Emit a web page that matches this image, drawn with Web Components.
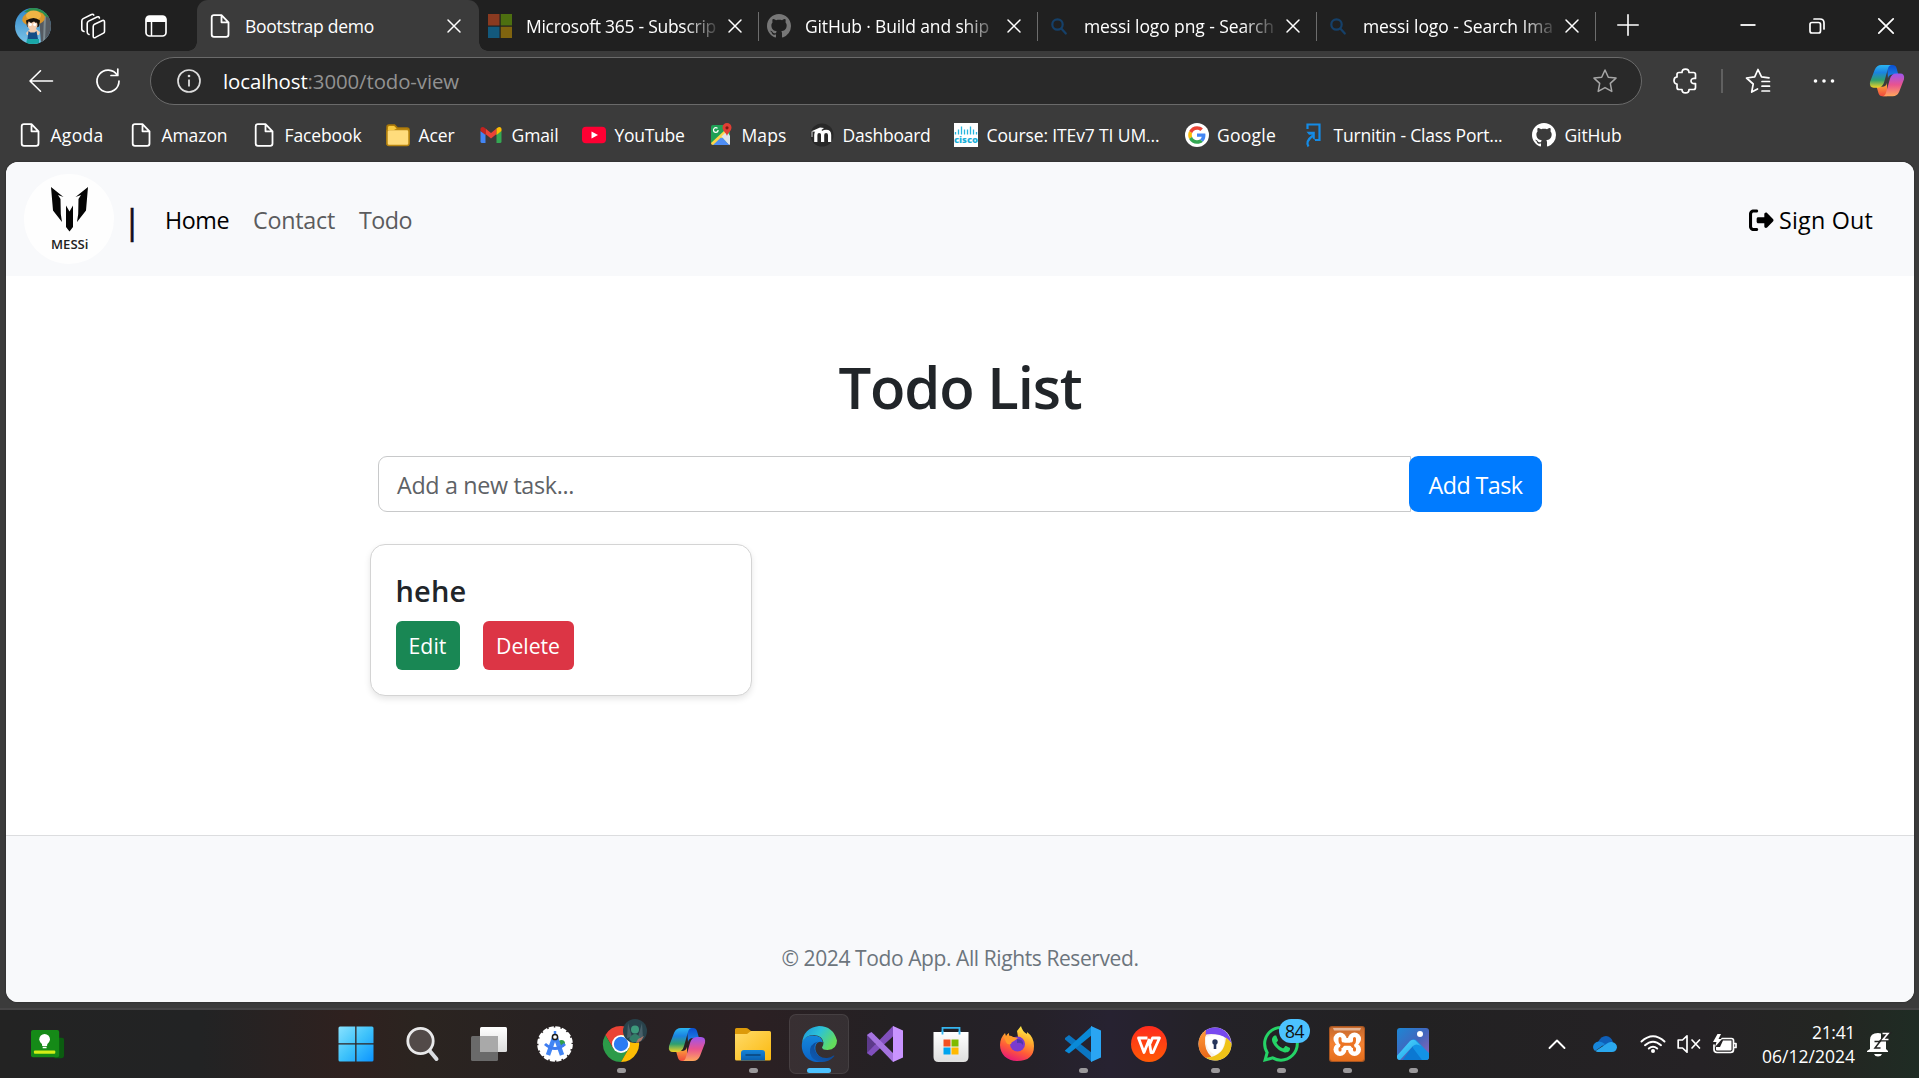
<!DOCTYPE html>
<html lang="en">
<head>
<meta charset="utf-8">
<title>Bootstrap demo</title>
<style>
html,body{margin:0;height:100%;overflow:hidden;background:#3b3b3b}
body{font-family:"Open Sans","Noto Sans",sans-serif}
</style>
</head>
<body>
<desktop-screen></desktop-screen>
<script>
const GH='M8 0C3.58 0 0 3.58 0 8c0 3.54 2.29 6.53 5.47 7.59.4.07.55-.17.55-.38 0-.19-.01-.82-.01-1.49-2.01.37-2.53-.49-2.69-.94-.09-.23-.48-.94-.82-1.13-.28-.15-.68-.52-.01-.53.63-.01 1.08.58 1.23.82.72 1.21 1.87.87 2.33.66.07-.52.28-.87.51-1.07-1.78-.2-3.64-.89-3.64-3.95 0-.87.31-1.59.82-2.15-.08-.2-.36-1.02.08-2.12 0 0 .67-.21 2.2.82.64-.18 1.32-.27 2-.27s1.36.09 2 .27c1.53-1.04 2.2-.82 2.2-.82.44 1.1.16 1.92.08 2.12.51.56.82 1.27.82 2.15 0 3.07-1.87 3.75-3.65 3.95.29.25.54.73.54 1.48 0 1.07-.01 1.93-.01 2.2 0 .21.15.46.55.38A8.01 8.01 0 0 0 16 8c0-4.42-3.58-8-8-8z';
const lg=(id,stops,dir='x1="0" y1="0" x2="0" y2="1"')=>`<linearGradient id="${id}" ${dir}>${stops.map((s,i)=>`<stop offset="${i/(stops.length-1)}" stop-color="${s}"/>`).join('')}</linearGradient>`;
const line='fill="none" stroke="#fff" stroke-linecap="round" stroke-linejoin="round"';

/* name: [width, height, markup] */
const ICONS={
avatar:[36,36,`<defs><clipPath id="c"><circle cx="18" cy="18" r="18"/></clipPath>${lg('sky',['#3187c9','#7cc4e8'])}</defs><g clip-path="url(#c)"><path fill="url(#sky)" d="M0 0h36v36H0z"/><path fill="#555b62" d="M24 8l12-2v30H26z"/><path fill="#7d8a90" d="M29 8l2 0-1 26-2 0z"/><path fill="#2e8f4d" d="M9 4l8-5 12 2 6 9-8-3z"/><ellipse cx="18.500" cy="10.500" rx="11.500" ry="7" fill="#d9962b" transform="rotate(-8 18 10)"/><ellipse cx="18.500" cy="7.500" rx="7.500" ry="5" fill="#efb444"/><path fill="#17130f" d="M11 12.500q8-5 14 0l-1 6q-6 3-12 0z"/><ellipse cx="17.500" cy="17" rx="5" ry="5.300" fill="#f3cdb0"/><path fill="#17130f" d="M11.500 13q6-4 12 0l-2.500 2-2-1.500-3 1.500-2-1.500z"/><circle cx="15.300" cy="16.500" r="1.500" fill="#fff"/><circle cx="19.700" cy="16.500" r="1.500" fill="#fff"/><path fill="#f3cdb0" d="M15 21h6l4 3-1 3-12 0-1-2z"/><path fill="#154c86" d="M13.500 23l2 1.500h4l2-1.500 1.500 8-10.500 0z"/><path fill="#19a7a8" d="M12 31h12v5H11z"/></g>`],
spaces:[26,26,`<g ${line} stroke-width="1.600"><path d="M14.500 11.200l8-3.600q2-.7 2 1.300v9.500q0 1.200-1 1.700l-8 4.300q-2.300 1-2.300-1.200v-9.800q0-1.600 1.300-2.200z"/><path d="M9 21.500q-1.800-.5-1.800-2.500V10.500q0-1.700 1.400-2.400L17 4q1.800-.8 2.400 1"/><path d="M4 18.500q-2.200-.5-2.200-2.500V8q0-1.700 1.400-2.400L11.500 1.500q1.600-.7 2.300.6"/></g>`],
tabmenu:[22,22,`<rect x="1" y="1" width="20" height="20" rx="3.500" fill="none" stroke="#fff" stroke-width="1.700"/><path fill="#fff" d="M1 7V4q0-3 3-3h14q3 0 3 3v3H1z"/><path stroke="#fff" stroke-width="1.500" d="M6.500 6v15"/>`],
doc:[24,24,`<path ${line} stroke-width="1.800" d="M13.500 1.200H6Q3.700 1.200 3.700 3.500v17Q3.700 22.800 6 22.800h12.200q2.300 0 2.300-2.300V8.300zV8.300h7"/>`],
ms:[24,24,`<path fill="#8a3a20" d="M0 0h11.500v11.500H0z"/><path fill="#4d6f10" d="M12.700 0H24v11.500H12.700z"/><path fill="#13597c" d="M0 12.700h11.500V24H0z"/><path fill="#80640f" d="M12.700 12.700H24V24H12.700z"/>`],
ghdim:[16,16,`<path fill="#777" d="${GH}"/>`],
github:[16,16,`<path fill="#fff" d="${GH}"/>`],
lens:[24,24,`<g fill="none" stroke="#154069" stroke-width="2.200" stroke-linecap="round"><circle cx="11.500" cy="10.500" r="5.200"/><path d="M15.300 14.500l4.500 5"/></g>`],
x:[14,14,`<path ${line} stroke-width="1.500" d="M1 1l12 12M13 1L1 13"/>`],
plus:[22,22,`<path ${line} stroke-width="1.600" d="M11 .8v20.400M.8 11h20.400"/>`],
min:[16,16,`<path stroke="#fff" stroke-width="1.800" d="M.5 7h15"/>`],
restore:[16,16,`<g ${line} stroke-width="1.700"><rect x="1" y="4.500" width="10.500" height="10.500" rx="2"/><path d="M5 1h6q4 0 4 4v6"/></g>`],
closew:[16,16,`<path ${line} stroke-width="1.700" d="M.8.8l14.400 14.400M15.200.8L.8 15.200"/>`],
back:[24,24,`<path ${line} stroke-width="1.600" d="M11.500 1.800L1 12l10.500 10.200M1 12h22.500"/>`],
reload:[26,26,`<g ${line} stroke-width="1.700"><path d="M22.300 7.200A11 11 0 1 0 24 13"/><path d="M22.800 1v6.500H16"/></g>`],
info:[24,24,`<circle cx="12" cy="12" r="11" fill="none" stroke="#ddd" stroke-width="1.700"/><path stroke="#ddd" stroke-width="1.800" d="M12 10.500v7"/><circle cx="12" cy="7" r="1.300" fill="#ddd"/>`],
star:[24,24,`<path fill="none" stroke="#a6a6a6" stroke-width="1.500" stroke-linejoin="round" d="M12 1l3.300 7.200 7.700.9-5.700 5.300 1.500 8-6.800-3.800-6.800 3.800 1.500-8L1 9.100l7.700-.9z"/>`],
puzzle:[24,26,`<path ${line} stroke-width="1.700" d="M9 4.500c0-4.600 7-4.600 7 0h4.500q2 0 2 2v4c-6-1.500-6 6.500 0 5v4q0 2-2 2H16c0 4.600-7 4.600-7 0H6q-2 0-2-2v-3.500c-4 0-4-7 0-7V6.500q0-2 2-2z"/>`],
favs:[26,26,`<g ${line} stroke-width="1.700"><path d="M12.500 21l-5.800 3 1.500-8L1.500 10l8.200-1.200L13 1.500l3.500 7.300 7.500 1"/><path d="M17 13.500h7.500M17 18.200h7.500M17 23h7.500"/></g>`],
dots:[22,6,`<g fill="#fff"><circle cx="2.500" cy="3" r="1.800"/><circle cx="11" cy="3" r="1.800"/><circle cx="19.500" cy="3" r="1.800"/></g>`],
copilot:[36,33,`<defs>${lg('a',['#2bb5f2','#1b83e0','#2f9f6f','#f1d326'])}${lg('b',['#0a4fd0','#1f86ea'])}${lg('d',['#9c55ef','#e9538f','#ffa75c'])}${lg('e',['#ffb13c','#f0483d'])}</defs><path fill="url(#b)" d="M18 0h6q3 0 4 3l2 7h-6q-4 0-5 4z"/><path fill="url(#e)" d="M18 33h-5q-3 0-4-3l-2-7h6q4 0 5-4z"/><path fill="url(#a)" d="M12 0h11q-3 0-4 4l-4 14q-1.500 6-7 6H4q-5 0-4-6L5 5q2-5 7-5z"/><path fill="url(#d)" d="M24 33H13q3 0 4-4l4-14q1.500-6 7-6h4q5 0 4 6l-5 13q-2 5-7 5z"/>`],
folder:[24,24,`<path fill="#c9931a" stroke="#a87708" stroke-width="1.500" d="M1 21V4q0-2 2-2h5.500l3 3H21q2 0 2 2v13z"/><rect x="1" y="6.500" width="22" height="16" rx="2" fill="#ffdc7c" stroke="#b88510" stroke-width="1.500"/><path fill="#f8c93e" d="M2 7V4.500Q2 3 3.500 3H8l2.500 2.500L8 7z"/>`],
gmail:[24,24,`<path fill="#4285f4" d="M1.500 8v10.500q0 1.500 1.500 1.500h3.500V11z"/><path fill="#34a853" d="M17.500 11v9H21q1.500 0 1.500-1.500V8z"/><path fill="#ea4335" d="M6.500 11V5.500L12 10l5.500-4.500V11L12 15.500z"/><path fill="#c5221f" d="M1.500 8V6.200C1.500 4 4 3.500 5.500 4.700l1 .8V12z"/><path fill="#fbbc04" d="M17.500 12V5.500l1-.8c1.500-1.200 4-.7 4 1.500V8z"/>`],
youtube:[24,24,`<rect y="3.800" width="24" height="16.500" rx="4" fill="#ff0033"/><path fill="#fff" d="M9.500 8.500v7L16 12z"/>`],
maps:[24,24,`<path fill="#1fa055" d="M2 4q0-2 2-2h17v18H2z"/><path fill="#4e8df5" d="M4 22L12 13l8 9z"/><path fill="#fdd64b" d="M2 20L16 7l3 3L5 22H4q-2 0-2-2z"/><path fill="#dfe4ea" d="M12.500 13.500L18 8l3 5v8.500L20 22z"/><path fill="#4e8df5" d="M4 22l8-7.500L20 22z"/><circle cx="6.800" cy="7" r="2.300" fill="none" stroke="#fff" stroke-width="1.200" stroke-dasharray="11.500 3"/><path fill="#df3f34" d="M18 13c-.5-3-4.500-5-4.500-8.500a4.500 4.500 0 0 1 9 0C22.500 8 18.500 10 18 13z"/><circle cx="18" cy="4.800" r="1.600" fill="#7c1a12"/>`],
moodle:[24,24,`<circle cx="12" cy="12" r="11.500" fill="#292929"/><path fill="none" stroke="#fff" stroke-width="3.200" d="M5.800 19v-7q0-3.600 3.400-3.600t3.400 3.600v7M12.600 12q0-3.600 3.500-3.600t3.500 3.600v7"/><path fill="#fff" d="M1 8.500l9-4 4 .6-5 4z"/><path stroke="#fff" stroke-width=".8" d="M2 9v5"/>`],
cisco:[24,24,`<path fill="#fff" d="M0 0h24v24H0z"/><g stroke="#26b5dd" stroke-width="1.300"><path d="M1.500 9v2.500M4.500 6.500v5M7.500 3.500v8M10.500 6.500v5M13.500 6.500v5M16.500 3.500v8M19.500 6.500v5M22.500 9v2.500"/></g><text x="0" y="20" font-size="9" font-weight="800" fill="#1bafd9" font-family="Open Sans" textLength="24" lengthAdjust="spacingAndGlyphs">cisco</text>`],
google:[24,24,`<circle cx="12" cy="12" r="12" fill="#fff"/><g transform="translate(3.200 3.200) scale(.367)"><path fill="#EA4335" d="M24 9.500c3.540 0 6.710 1.220 9.210 3.600l6.850-6.850C35.900 2.380 30.470 0 24 0 14.620 0 6.510 5.380 2.560 13.220l7.980 6.190C12.430 13.720 17.740 9.500 24 9.500z"/><path fill="#4285F4" d="M46.980 24.550c0-1.570-.15-3.090-.38-4.550H24v9.020h12.940c-.58 2.960-2.260 5.480-4.780 7.180l7.730 6c4.510-4.180 7.090-10.360 7.090-17.650z"/><path fill="#FBBC05" d="M10.530 28.590c-.48-1.450-.76-2.990-.76-4.590s.27-3.140.76-4.590l-7.980-6.190C.92 16.460 0 20.120 0 24c0 3.880.92 7.540 2.560 10.780l7.970-6.190z"/><path fill="#34A853" d="M24 48c6.480 0 11.930-2.130 15.890-5.810l-7.730-6c-2.150 1.450-4.920 2.300-8.160 2.300-6.260 0-11.570-4.220-13.470-9.910l-7.980 6.190C6.510 42.620 14.620 48 24 48z"/></g>`],
turnitin:[24,24,`<g fill="none" stroke="#148be6" stroke-width="2.200"><path d="M6.500 6V1.500h12V17h-4.500"/><path d="M7.500 23.500q-3.500-5 4.500-11"/></g><path fill="#148be6" d="M5.500 8.800h8.300v8.200l-2.200-1.800v-3.500H8z"/>`],
signout:[512,512,`<path d="M377.900 105.900L500.700 228.700c7.200 7.200 11.300 17.100 11.300 27.300s-4.100 20.100-11.300 27.300L377.900 406.100c-6.400 6.400-15 9.900-24 9.900c-18.700 0-33.900-15.200-33.900-33.900l0-62.100-128 0c-17.700 0-32-14.300-32-32l0-64c0-17.700 14.300-32 32-32l128 0 0-62.100c0-18.700 15.200-33.900 33.900-33.900c9 0 17.600 3.600 24 9.900zM160 96L96 96c-17.700 0-32 14.300-32 32l0 256c0 17.700 14.300 32 32 32l64 0c17.700 0 32 14.300 32 32s-14.300 32-32 32l-64 0c-53 0-96-43-96-96L0 128C0 75 43 32 96 32l64 0c17.700 0 32 14.300 32 32s-14.300 32-32 32z"/>`],
messi:[90,90,`<circle cx="45" cy="45" r="45" fill="#fefefe"/><g fill="#050505"><path d="M27 13l12.500 10-5.500-2 2.500 4 .3 15 1.200 8-9-11.500z"/><path d="M64 13L51.500 23l5.500-2-2.500 4-.3 15-1.200 8 9-11.500z"/><path d="M42 31.500l3.500 6 3.500-6V53l-3.500 4.500L42 53z"/></g><text x="27" y="74.500" font-size="12.500" font-weight="600" font-family="Open Sans" fill="#222" textLength="37.500" lengthAdjust="spacingAndGlyphs">MESSi</text>`],
start:[36,36,`<defs>${lg('w',['#8be3ff','#3fc3fb','#0a92ff'],'gradientUnits="userSpaceOnUse" x1="0" y1="0" x2="36" y2="36"')}</defs><path fill="url(#w)" d="M2 .5h15.200v16.700H.5V2Q.5.500 2 .5zM18.500.5H34q1.500 0 1.500 1.500v15.200h-17zM.5 18.500h16.700v17H2q-1.500 0-1.500-1.500zM18.500 18.500h17V34q0 1.500-1.500 1.500H18.500z"/>`],
search:[36,36,`<path stroke="#d9dce0" stroke-width="4" stroke-linecap="round" d="M24 24l7.500 9"/><circle cx="15.500" cy="15" r="12.700" fill="#524a48" stroke="#e9e9ea" stroke-width="2.800"/>`],
taskview:[36,36,`<defs>${lg('t',['#fff','#dcdcdc'])}</defs><rect x="9" y="1" width="27" height="25" rx="1.500" fill="url(#t)"/><rect y="10" width="27" height="25" rx="1.500" fill="#6a6a6a"/><path fill="#a9a9a9" d="M9 10h18v16H9z"/>`],
android:[36,36,`<circle cx="18" cy="18" r="16.600" fill="#fff" stroke="#fff" stroke-width="2.500" stroke-dasharray="5 1.500"/><circle cx="24.500" cy="17.500" r="3.500" fill="#2e9e4d"/><path fill="none" stroke="#4285f4" stroke-width="4.500" d="M17 12L11 29M19 12l6 17"/><path fill="none" stroke="#3f7df0" stroke-width="3" d="M8 18q10 9 20 0"/><path stroke="#4285f4" stroke-width="2.500" d="M18 5v5"/><circle cx="18" cy="11" r="2.600" fill="#fff" stroke="#1b1b1b" stroke-width="1.500"/>`],
chrome:[36,36,`<path fill="#ea4335" d="M2.400 9l7.800 13.500L18 9h15.600A18 18 0 0 0 2.400 9z"/><path fill="#2c9b49" d="M2.400 9l7.800 13.500L18 27l8-4.500L18 36A18 18 0 0 1 2.400 9z"/><path fill="#fbbc04" d="M18 9h15.600A18 18 0 0 1 18 36l7.800-13.500z"/><circle cx="18" cy="18" r="9" fill="#fff"/><circle cx="18" cy="18" r="7.200" fill="#2b7bf3"/>`],
profile:[24,24,`<circle cx="12" cy="12" r="12" fill="#28424b"/><path fill="#476069" d="M5 4l4 14-5 1zM19 4l-4 14 5 1z"/><circle cx="12" cy="10.500" r="4" fill="#3d9a7c"/><path fill="#337d68" d="M6 20q6-10 12 0l-3 3H9z"/><path fill="#a8776a" d="M15 20l6-3-3 5-5 2z"/>`],
explorer:[36,36,`<defs>${lg('f',['#ffdb69','#fbb90f'],'x1="0" y1="0" x2="1" y2="1"')}${lg('g',['#1484d8','#0b5fae'])}</defs><path fill="#dc9a0a" d="M0 10V3.500Q0 2 1.500 2H11q1.500 0 2.500 1l2.500 2v5z"/><path fill="url(#f)" d="M0 8h12l4-3h18.500q1.500 0 1.500 1.500V33q0 1.500-1.500 1.500h-33Q0 34.500 0 33z"/><path fill="url(#g)" d="M6 34.500V27q0-3 3-3h18q3 0 3 3v7.500z"/><path stroke="#0a4379" stroke-width="1.500" stroke-linecap="round" d="M11 29h14"/>`],
edge:[36,36,`<defs>${lg('h',['#1b91dc','#2cc2d8','#63dc5c'],'x1="0" y1="0" x2="1" y2=".5"')}${lg('i',['#1486dc','#0b63c5'])}${lg('j',['#0c3f85','#0f5cb5'],'x1="1" y1="0" x2="0" y2="1"')}</defs><path fill="url(#i)" d="M1 17Q3 9.500 12 9.500q9 0 10 7-5-2-7 2-2.500 6 3 11.500 4 3.500 8 3.500-4 2.500-9 2.500C7 36-.5 28 1 17z"/><path fill="url(#j)" d="M17 15.500q-5 3-3 9 3 8 12 7.500 4-.5 6.500-2.500 1.500-.5.500 1Q28 36 20 36q-9-1-11-9-1-9 8-11.500z"/><path fill="url(#h)" d="M1 17Q2.500 2 18 0q14 0 18 14.500 0 9-9.500 9.500-5 0-5.500-2.500 1.500-2 1.500-5-1-7-9.500-7.500Q4 9 1 17z"/>`],
vs:[36,36,`<path fill="#5c3a8a" d="M0 9l3-2.500L8 9v18l-5 2.500L0 27z"/><path fill="#8150bd" d="M0 27L26 0l6 5L4.500 30z"/><path fill="#a574df" d="M0 9l4.500-3L30 31l-4 5z"/><path fill="#c994ff" d="M26 0l10 4.500v27L26 36z"/>`],
store:[36,36,`<defs>${lg('s',['#fff','#dedede'])}</defs><path fill="none" stroke="#35b5ef" stroke-width="1.800" d="M9.500 8V1.900h17V8"/><path fill="url(#s)" d="M.5 6h35v25q0 5-5 5h-25q-5 0-5-5z"/><path fill="none" stroke="#35b5ef" stroke-width="1.800" d="M9.500 5v3.500M26.500 5v3.500"/><path fill="#f25022" d="M10.500 13.500h7v7h-7z"/><path fill="#7fba00" d="M18.500 13.500h7v7h-7z"/><path fill="#00a4ef" d="M10.500 21.500h7v7h-7z"/><path fill="#ffb900" d="M18.500 21.500h7v7h-7z"/>`],
firefox:[36,36,`<defs>${lg('k',['#fff04e','#ffae2e','#ff5a38','#e5167c'],'x1=".7" y1="0" x2=".3" y2="1"')}</defs><path fill="url(#k)" d="M18 35C8 35 1 28 1 19c0-5 2-9 5-12l1 3q1-2 3-3v3l4 1 5 0-1-6 4-5q1 5 6 8l0-2q7 5 7 14 0 15-17 15z"/><circle cx="18.500" cy="18" r="7.500" fill="#7a3bd0"/><path fill="#ff9a2a" d="M5 11q6-3 9 0l5 1-4 3q-3 1-3 3-4 1-5-2z"/><path fill="#4e36b0" d="M18 13q7 0 6 6-2-3-6-2z"/>`],
vscode:[36,36,`<path fill="#0b76c2" d="M0 12l4-3 23 18v9L0 13.500z"/><path fill="#0a8ad8" d="M0 24.500L27 0v9L4 27.500 0 25z"/><path fill="#2aa5f3" d="M26 0l10 4.500v27L26 36z"/>`],
wps:[36,36,`<defs>${lg('r',['#ff2b1d','#ff5a06'])}</defs><circle cx="18" cy="18" r="18" fill="url(#r)"/><path fill="none" stroke="#fff" stroke-width="2.800" stroke-linejoin="round" d="M16.500 12H7.500l5.500 14.500L18 14l2 12.500h2L28.500 12h-7l-3.500 8"/>`],
shield:[36,36,`<defs>${lg('o',['#ff9a3a','#e9691a'])}</defs><circle cx="18" cy="18" r="16.500" fill="#f6f2ec"/><path fill="url(#o)" d="M9 4Q1.500 9 1.500 18q0 9 7 14 3 0 6-1Q7 24 8 13q0-5 6-9z"/><path fill="#7749ef" d="M9 4q12-6 21 3 4 5 4.500 10-5-6-12-8-7-1.500-14-.5z"/><path fill="#efc318" d="M34.500 18Q34 32 20 34.500q-8 0-11-3 9 0 15-6 4-4 5-14 4 3 5.500 6.500z"/><path fill="#fff" d="M9 11q9-4 18 0 2 12-9 18-10-5-9-18z"/><circle cx="18" cy="16" r="2.700" fill="#25355c"/><path fill="#25355c" d="M16.700 17h2.600v6h-2.600z"/>`],
whatsapp:[16,16,`<path fill="#25d366" d="M13.601 2.326A7.850 7.850 0 0 0 7.994 0C3.627 0 .068 3.558.064 7.926c0 1.399.366 2.760 1.057 3.965L0 16l4.204-1.102a7.900 7.900 0 0 0 3.790.965h.004c4.368 0 7.926-3.558 7.930-7.930A7.900 7.900 0 0 0 13.600 2.326zM7.994 14.521a6.600 6.600 0 0 1-3.356-.92l-.24-.144-2.494.654.666-2.433-.156-.251a6.560 6.560 0 0 1-1.007-3.505c0-3.626 2.957-6.584 6.591-6.584a6.560 6.560 0 0 1 4.660 1.931 6.560 6.560 0 0 1 1.928 4.660c-.004 3.639-2.961 6.592-6.592 6.592m3.615-4.934c-.197-.099-1.170-.578-1.353-.646-.182-.065-.315-.099-.445.099-.133.197-.513.646-.627.775-.114.133-.232.148-.43.05-.197-.1-.836-.308-1.592-.985-.59-.525-.985-1.175-1.103-1.372-.114-.198-.011-.304.088-.403.087-.088.197-.232.296-.346.1-.114.133-.198.198-.33.065-.134.034-.248-.015-.347-.05-.099-.445-1.076-.612-1.470-.16-.389-.323-.335-.445-.34-.114-.007-.247-.007-.38-.007a.73.730 0 0 0-.529.247c-.182.198-.691.677-.691 1.654s.71 1.916.81 2.049c.098.133 1.394 2.132 3.383 2.992.47.205.84.326 1.129.418.475.152.904.129 1.246.08.38-.058 1.171-.48 1.338-.943.164-.464.164-.86.114-.943-.049-.084-.182-.133-.38-.232"/>`],
xampp:[36,36,`<defs>${lg('x',['#c4692f','#f58232','#e56e1c'])}</defs><rect width="36" height="36" rx="3" fill="#a95520"/><rect x="1" y="1" width="34" height="34" rx="3" fill="url(#x)"/><path fill="#fff" opacity=".5" d="M4 2h28l-1 2.500H5z"/><g fill="#fff"><circle cx="11" cy="13" r="6.500"/><circle cx="25.500" cy="13" r="6.500"/><circle cx="11" cy="23.500" r="6.500"/><circle cx="25.500" cy="23.500" r="6.500"/><path d="M11 12h14v12H11z"/></g><g fill="none" stroke="#ec7424" stroke-width="3" stroke-linecap="round"><path d="M11 12.500v2q0 3 3 3.700h8.500q3-.7 3-3.700v-2M11 24v-1.500M25.500 24v-1.500"/><path d="M12.500 20.500l2-2.500M24 20.500L22 18"/></g>`],
photos:[36,36,`<defs>${lg('p',['#178bd8','#4266bd','#a263b5'],'x1="0" y1="0" x2="1" y2="1"')}${lg('q',['#55dcff','#179ce8'],'x1="0" y1="0" x2="1" y2="1"')}<clipPath id="pc"><rect x="2" y="2" width="32" height="32" rx="3"/></clipPath></defs><g clip-path="url(#pc)"><path fill="url(#p)" d="M0 0h36v36H0z"/><path fill="#0b78d2" d="M6 36l12-16 18 16z"/><path fill="#1393e6" d="M17 14q3-2 5 1l14 14v7l-9-2-9-12z"/><path fill="url(#q)" d="M0 32l15-17q4-3 7 1l4 4q-5-3-8 0L5 34H2z"/></g><circle cx="25" cy="8" r="3" fill="#fff"/>`],
widget:[36,30,`<path fill="#0b5c10" d="M28 8h4q2 0 2 2v16q0 3-3 3h-7z"/><rect width="29" height="28" rx="2" fill="#158a17"/><rect x="3" y="21" width="22" height="3.500" rx="1" fill="#d2ee17"/><circle cx="14" cy="9.500" r="5.500" fill="#fff"/><path fill="#fff" d="M11 13h6l-.5 3.500h-5zM12 17.300h4v1.500h-4z"/>`],
chev:[18,12,`<path ${line} stroke-width="1.900" d="M1.500 10L9 2.500l7.500 7.500"/>`],
onedrive:[24,16,`<path fill="#0f5fb8" d="M5 6q3-6 8-6 5 .5 7 6l-8 5z"/><path fill="#1786da" d="M6 5.500q3 0 6 2.500l-10 7q-2-1.500-2-4 .5-5 6-5.500z"/><path fill="#2aa8ee" d="M2.500 15L14 7.500q2-2 5-1.500 5 1 5 5.500-1 4.500-5 4.500H5q-1.500 0-2.500-1z"/>`],
wifi:[26,18,`<g ${line} stroke-width="2"><path d="M1.500 6.500Q13-4 24.500 6.500M5 10.200q8-7 16 0M8.800 13.500q4.200-3.500 8.400 0"/></g><circle cx="13" cy="16" r="2" fill="#fff"/>`],
mute:[24,20,`<g ${line} stroke-width="1.700"><path d="M10 1.800v16.400L5.500 14H1.200V6h4.300z"/><path d="M15 6l7.500 8M22.500 6L15 14"/></g>`],
battery:[26,20,`<g ${line} stroke-width="1.700"><path d="M10 4.500h9.500q2 0 2 2v9q0 3-3 3H5q-3 0-3-3V11"/><path d="M22 9.500h2v4h-2"/></g><path fill="#fff" d="M11 6.500h8.500v9q0 1-1 1H5q-1 0-1-1V13h4z"/><path fill="#fff" d="M5.500 0L1 8h3.500L3 13l7-8H6.500L9 0z"/>`],
bell:[24,26,`<path fill="#fff" d="M4 18V9q0-7 8-7 1.500 0 3 .5V9h5v9l2 2v1H1v-1zM8 23h8q-1 2.500-4 2.500T8 23z"/><path fill="none" stroke="#232423" stroke-width="1.500" d="M8.500 10.500h5.500l-5 6.500h5.500"/><path fill="none" stroke="#232423" stroke-width="4" d="M16.500 3h5.500l-5 5.500h5.500"/><path fill="none" stroke="#fff" stroke-width="1.600" d="M16.500 2.500h5.500l-5 6h5.500"/>`]
};

const define=(name,css,html,after)=>customElements.define(name,class extends HTMLElement{
  connectedCallback(){
    if(this.shadowRoot)return;
    const t=document.createElement('template');
    t.innerHTML=`<style>:host{display:block;box-sizing:border-box}*{box-sizing:border-box}${css}</style>${typeof html==='function'?html(this):html}`;
    this.attachShadow({mode:'open'}).append(document.importNode(t.content,true));
    if(after)after(this);
  }
});

/* Text run whose tracking is adjusted to fill the advance width "w". */
define('fit-text',':host{display:block;white-space:pre;flex:none}span{display:inline-block}','<span><slot></slot></span>',el=>{
  const w=+el.getAttribute('w'),s=el.shadowRoot.querySelector('span');
  el.style.width=w+'px';
  s.style.letterSpacing=((w-s.getBoundingClientRect().width)/el.textContent.length).toFixed(3)+'px';
});
define('ui-icon',':host{flex:none;line-height:0}svg{display:block;overflow:visible}',el=>{
  const [w,h,m]=ICONS[el.getAttribute('name')],s=+el.getAttribute('size')||w;
  return `<svg width="${s}" height="${s*h/w}" viewBox="0 0 ${w} ${h}">${m}</svg>`;
});

define('browser-tab',`
:host{width:279px;height:51px;flex:none;display:flex;align-items:center;padding-left:9px;position:relative;color:#fff;font-size:17.500px}
:host([sep])::after{content:"";position:absolute;right:-1px;top:12px;width:1.500px;height:29px;background:#6d6d6d}
:host([active]){background:#3b3b3b;border-radius:11px 11px 0 0;width:282px;margin-left:-3px;padding-left:11px}
:host([active])::before,:host([active])::after{content:"";position:absolute;bottom:0;width:9px;height:9px}
:host([active])::before{left:-9px;background:radial-gradient(circle at 0 0,transparent 8.500px,#3b3b3b 9px)}
:host([active])::after{right:-9px;background:radial-gradient(circle at 100% 0,transparent 8.500px,#3b3b3b 9px)}
.i{width:24px;display:flex;justify-content:center}
.t{width:193px;margin-left:14px;overflow:hidden}
:host([active]) .t{margin-left:13px}
:host([fade]) .t{-webkit-mask-image:linear-gradient(90deg,#000 158px,rgba(0,0,0,.15) 190px)}
.x{width:14px;margin-left:9px}`,
el=>`<div class="i"><ui-icon name="${el.getAttribute('icon')}" size="24"></ui-icon></div><div class="t"><slot></slot></div><div class="x"><ui-icon name="x"></ui-icon></div>`);

define('tab-strip',`
:host{display:flex;height:51px;background:#202020;align-items:center}
.left{width:200px;display:flex;align-items:center;padding-left:15px;flex:none}
.left ui-icon+ui-icon{margin-left:29px}.left ui-icon+ui-icon+ui-icon{margin-left:39px}
.plus{margin-left:22px;margin-top:-1px}.win{margin-left:auto;display:flex;gap:53px;padding-right:25px}`,
`<div class="left"><ui-icon name="avatar"></ui-icon><ui-icon name="spaces"></ui-icon><ui-icon name="tabmenu"></ui-icon></div>
<browser-tab active icon="doc"><fit-text w="129">Bootstrap demo</fit-text></browser-tab>
<browser-tab sep fade icon="ms"><fit-text w="190">Microsoft 365 - Subscrip</fit-text></browser-tab>
<browser-tab sep fade icon="ghdim"><fit-text w="184">GitHub · Build and ship</fit-text></browser-tab>
<browser-tab sep fade icon="lens"><fit-text w="190">messi logo png - Search</fit-text></browser-tab>
<browser-tab sep fade icon="lens"><fit-text w="190">messi logo - Search Ima</fit-text></browser-tab>
<ui-icon class="plus" name="plus"></ui-icon>
<div class="win"><ui-icon name="min"></ui-icon><ui-icon name="restore"></ui-icon><ui-icon name="closew"></ui-icon></div>`);

define('tool-bar',`
:host{display:flex;height:59px;align-items:center;padding:1px 15px 0 29px}
.reload{margin-left:42px}
.addr{margin-left:29px;width:1492px;height:48px;border:1.500px solid #6a6a6a;border-radius:24px;background:#292929;display:flex;align-items:center;padding:0 24px 0 26px;font-size:20.400px;color:#929292}
.addr b{font-weight:400;color:#fff}.addr fit-text{margin-left:22px}.addr .star{margin-left:auto}
.puz{margin-left:31px}.sep{width:1.500px;height:24px;background:#606060;margin-left:24px}.fav{margin-left:22px}.dots{margin-left:42px}.cop{margin-left:auto}`,
`<ui-icon name="back"></ui-icon><ui-icon class="reload" name="reload"></ui-icon>
<div class="addr"><ui-icon name="info"></ui-icon><fit-text w="236">​<b>localhost</b>:3000/todo-view</fit-text><ui-icon class="star" name="star"></ui-icon></div>
<ui-icon class="puz" name="puzzle"></ui-icon><div class="sep"></div><ui-icon class="fav" name="favs"></ui-icon><ui-icon class="dots" name="dots"></ui-icon><ui-icon class="cop" name="copilot" size="34"></ui-icon>`.replace('\u200b',''));

define('bookmark-item',':host{display:flex;align-items:center;gap:8.500px;flex:none;font-size:17.500px;color:#fff}::slotted(*){margin-top:-1px}',
el=>`<ui-icon name="${el.getAttribute('icon')}" size="24"></ui-icon><slot></slot>`,el=>el.style.width=el.getAttribute('cell')+'px');
const marks=[['doc',111,53,'Agoda'],['doc',123,66,'Amazon'],['doc',134,77,'Facebook'],['folder',93,36,'Acer'],['gmail',103,47,'Gmail'],['youtube',127,70,'YouTube'],['maps',101,45,'Maps'],['moodle',144,88,'Dashboard'],['cisco',230.5,173,'Course: ITEv7 TI UM...'],['google',116.5,59,'Google'],['turnitin',231,169,'Turnitin - Class Port...'],['github',120,57,'GitHub']];
define('bookmark-bar',':host{display:flex;align-items:center;height:52px;padding:0 0 2px 18px}',
marks.map(([i,c,w,t])=>`<bookmark-item icon="${i}" cell="${c}"><fit-text w="${w}">${t}</fit-text></bookmark-item>`).join(''));

define('nav-bar',`
:host{display:flex;height:114px;background:#f8f9fb;align-items:center;padding:0 41px 0 18px;font-size:23.300px;color:#5b5c5e}
.bar{font-size:35px;line-height:36px;color:#10101c;width:14px;margin-left:11px;margin-top:3px;font-family:"Open Sans";display:flex;justify-content:center;-webkit-text-stroke:.5px #10101c}
nav{display:flex;margin-left:26px;gap:24px;padding-top:2px}.on{color:#000}
.out{margin-left:auto;display:flex;align-items:center;gap:6px;color:#000;padding-top:2px}`,
`<ui-icon name="messi"></ui-icon><div class="bar">|</div>
<nav><fit-text class="on" w="64">Home</fit-text><fit-text w="82">Contact</fit-text><fit-text w="53">Todo</fit-text></nav>
<div class="out"><ui-icon name="signout" size="24.500"></ui-icon><fit-text w="94">Sign Out</fit-text></div>`);

define('task-card',`
:host{width:382px;height:152px;border:1px solid #d4d4d4;border-radius:15px;margin:32px 0 0 -8.500px;padding:28px 25px;background:#fff;box-shadow:0 3px 6px rgba(0,0,0,.1)}
.n{font-size:29px;line-height:36px;font-weight:600;color:#212529}
.b{display:flex;gap:23px;margin-top:12px;font-size:21.200px;color:#fff}
.b div{height:48.500px;border-radius:6px;display:flex;align-items:center;justify-content:center;padding-top:1px}
.e{width:64px;background:#198754}.d{width:91px;background:#dc3545}`,
`<div class="n"><slot></slot></div><div class="b"><div class="e"><fit-text w="38">Edit</fit-text></div><div class="d"><fit-text w="64">Delete</fit-text></div></div>`);

define('todo-form',`
:host{display:flex;height:56px;width:1164px;margin-top:34px;font-size:23.300px}
.in{width:1033px;border:1px solid #c8c9ca;border-radius:9px 0 0 9px;display:flex;align-items:center;padding:1px 0 0 18px;color:#5e6266;background:#fff}
.go{width:133px;margin-left:-2px;border-radius:9px;background:#007bff;color:#fff;display:flex;align-items:center;justify-content:center;padding-top:1px}`,
`<div class="in"><fit-text w="177">Add a new task...</fit-text></div><div class="go"><fit-text w="94">Add Task</fit-text></div>`);

define('page-footer',`:host{height:167px;border-top:1px solid #dcdddf;background:#f8f9fb;display:flex;justify-content:center;padding-top:107.500px;font-size:21px;line-height:28px;color:#6c757d}`,
`<fit-text w="357">© 2024 Todo App. All Rights Reserved.</fit-text>`);

define('page-view',`
:host{display:flex;flex-direction:column;height:840px;margin:0 5px 0 6px;border-radius:12px;overflow:hidden;background:#fff;box-shadow:0 0 2px #222}
main{flex:1;width:1164px;margin-left:372px;padding-top:75px}
h1{margin:0 0 -1px;font-size:58px;line-height:72px;font-weight:600;color:#212529;display:flex;justify-content:center}`,
`<nav-bar></nav-bar><main><h1><fit-text w="243">Todo List</fit-text></h1><todo-form></todo-form><task-card><fit-text w="71">hehe</fit-text></task-card></main><page-footer></page-footer>`);

define('task-app',`
:host{width:66px;height:68px;flex:none;display:flex;align-items:center;justify-content:center;position:relative}
.box{width:60px;height:60px;border-radius:7px;display:flex;align-items:center;justify-content:center}
:host([current]) .box{background:rgba(255,255,255,.07);border:1.500px solid rgba(255,255,255,.08)}
:host([run])::after{content:"";position:absolute;left:29px;bottom:5px;width:9px;height:5px;border-radius:3px;background:#9b999b}
:host([current])::after{left:21px;width:24px;background:#4cc2ff}
::slotted(*){position:absolute}`,
el=>`<div class="box"><ui-icon name="${el.getAttribute('icon')}" size="36"></ui-icon></div><slot></slot>`);

define('task-bar',`
:host{height:70px;border-top:2px solid #454445;display:flex;background:linear-gradient(90deg,#232323 0,#222324 200px,#2f211f 350px,#2b2420 420px,#262123 600px,#2b2023 750px,#242124 900px,#252128 1030px,#272231 1110px,#242228 1200px,#222122 1400px,#252225 1700px,#232622 1840px,#1f2c24 1919px);position:relative}
.left{width:324px;padding:20px 0 0 31px}
.apps{display:flex;width:1122px}
.start{margin-left:-1.500px;margin-right:1.500px}
.badge{left:31px;top:9px;width:31px;height:24px;border-radius:12px;background:#4cc2ff;color:#111;font-size:17.500px;line-height:24px;display:flex;justify-content:center}
.prof{left:35px;top:9px}
.tray{display:flex;align-items:center;height:68px;margin-left:102px}
.od{margin-left:27px}.wf{margin-left:23px}.mu{margin-left:11px}.ba{margin-left:11px}
.clock{display:flex;flex-direction:column;align-items:flex-end;width:94px;margin-left:23px;font-size:17.500px;line-height:24px;color:#fff;padding-bottom:1px}
.bell{margin-left:11px}`,
`<div class="left"><ui-icon name="widget" size="35"></ui-icon></div>
<div class="apps"><task-app class="start" icon="start"></task-app><task-app icon="search"></task-app><task-app icon="taskview"></task-app><task-app icon="android"></task-app><task-app run icon="chrome"><ui-icon class="prof" name="profile"></ui-icon></task-app><task-app icon="copilot"></task-app><task-app run icon="explorer"></task-app><task-app run current icon="edge"></task-app><task-app icon="vs"></task-app><task-app icon="store"></task-app><task-app icon="firefox"></task-app><task-app run icon="vscode"></task-app><task-app icon="wps"></task-app><task-app run icon="shield"></task-app><task-app run icon="whatsapp"><div class="badge"><fit-text w="19">84</fit-text></div></task-app><task-app run icon="xampp"></task-app><task-app run icon="photos"></task-app></div>
<div class="tray"><ui-icon name="chev"></ui-icon><ui-icon class="od" name="onedrive"></ui-icon><ui-icon class="wf" name="wifi"></ui-icon><ui-icon class="mu" name="mute"></ui-icon><ui-icon class="ba" name="battery"></ui-icon><div class="clock"><fit-text w="43">21:41</fit-text><fit-text w="93">06/12/2024</fit-text></div><ui-icon class="bell" name="bell"></ui-icon></div>`);

define('desktop-screen',':host{width:1919px;height:1078px;background:#3b3b3b;overflow:hidden}task-bar{margin-top:6px}',
'<tab-strip></tab-strip><tool-bar></tool-bar><bookmark-bar></bookmark-bar><page-view></page-view><task-bar></task-bar>');
</script>
</body>
</html>
